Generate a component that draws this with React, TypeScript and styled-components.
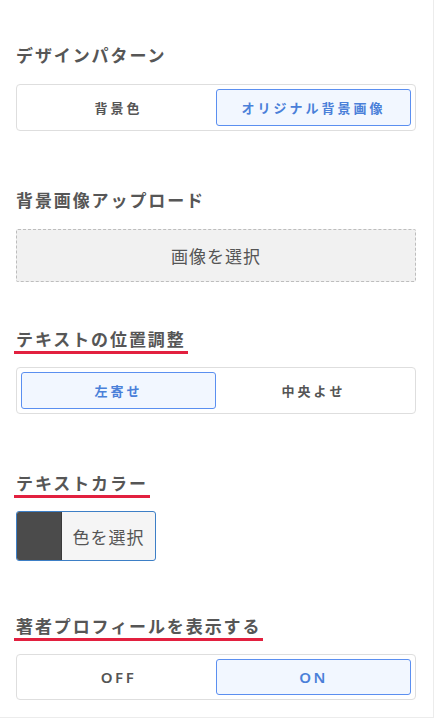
import styled, { createGlobalStyle } from "styled-components"

const GlobalStyle = createGlobalStyle`
    body {
        margin: 0;
        background: #fff;
        font-family: "Noto Sans CJK JP", "Noto Sans", sans-serif;
        color: #555;
    }
`

const Panel = styled.div`
    box-sizing: border-box;
    width: 434px;
    height: 718px;
    padding: 42px 17px 0 16px;
    border-right: 1px solid #ececec;
    border-bottom: 1px solid #ececec;
    display: flex;
    flex-direction: column;
`

const Section = styled.section<{ $top?: number }>`
    display: flex;
    flex-direction: column;
    align-items: flex-start;
    margin-top: ${(p) => p.$top ?? 0}px;
`

const Title = styled.h2<{ $marked?: boolean }>`
    margin: 0 0 ${(p) => (p.$marked ? 13 : 16)}px ${(p) => (p.$marked ? -2 : 0)}px;
    padding: 0 ${(p) => (p.$marked ? 2 : 0)}px;
    font-size: 17px;
    line-height: ${(p) => (p.$marked ? 24 : 26)}px;
    font-weight: 700;
    letter-spacing: 1.9px;
    color: #565656;
    border-bottom: ${(p) => (p.$marked ? "3px solid #e2203f" : "none")};
`

const Segmented = styled.div`
    box-sizing: border-box;
    width: 400px;
    padding: 4px;
    display: grid;
    grid-template-columns: 1fr 1fr;
    border: 1px solid #dedede;
    border-radius: 4px;
    background: #fff;
`

const Option = styled.button<{ $active?: boolean; $h: number }>`
    height: ${(p) => p.$h}px;
    margin: 0;
    padding: 0;
    border: 1.5px solid ${(p) => (p.$active ? "#5b8ff0" : "transparent")};
    border-radius: 3px;
    background: ${(p) => (p.$active ? "#f2f7ff" : "#fff")};
    color: ${(p) => (p.$active ? "#4a80d9" : "#555")};
    font-family: "Noto Sans CJK JP", "Noto Sans", sans-serif;
    font-size: 13px;
    font-weight: 700;
    letter-spacing: 3px;
`

const Latin = styled.span`
    font-family: "Noto Sans", sans-serif;
    font-size: 15px;
    font-weight: 600;
    letter-spacing: 2.5px;
`

const UploadBox = styled.button`
    box-sizing: border-box;
    width: 400px;
    height: 53px;
    border: 1px dashed #bdbdbd;
    border-radius: 2px;
    background: #f1f1f1;
    color: #555;
    font-family: "Noto Sans CJK JP", "Noto Sans", sans-serif;
    font-size: 17px;
    letter-spacing: 1px;
`

const ColorButton = styled.button`
    box-sizing: border-box;
    width: 140px;
    height: 50px;
    padding: 0;
    display: flex;
    border: 1.5px solid #3d7fc6;
    border-radius: 3px;
    overflow: hidden;
    background: #f5f5f5;
`

const Swatch = styled.span`
    width: 44px;
    background: #4b4b4b;
    border-right: 1px solid #3a3a3a;
`

const ColorLabel = styled.span`
    flex: 1;
    display: flex;
    align-items: center;
    justify-content: center;
    color: #555;
    font-family: "Noto Sans CJK JP", "Noto Sans", sans-serif;
    font-size: 17px;
    letter-spacing: 1px;
`

export default function App() {
    return (
        <>
            <GlobalStyle />
            <Panel>
                <Section>
                    <Title>デザインパターン</Title>
                    <Segmented>
                        <Option $h={37}>背景色</Option>
                        <Option $h={37} $active>オリジナル背景画像</Option>
                    </Segmented>
                </Section>
                <Section $top={56}>
                    <Title>背景画像アップロード</Title>
                    <UploadBox>画像を選択</UploadBox>
                </Section>
                <Section $top={45}>
                    <Title $marked>テキストの位置調整</Title>
                    <Segmented>
                        <Option $h={37} $active>左寄せ</Option>
                        <Option $h={37}>中央よせ</Option>
                    </Segmented>
                </Section>
                <Section $top={57}>
                    <Title $marked>テキストカラー</Title>
                    <ColorButton>
                        <Swatch />
                        <ColorLabel>色を選択</ColorLabel>
                    </ColorButton>
                </Section>
                <Section $top={53}>
                    <Title $marked>著者プロフィールを表示する</Title>
                    <Segmented>
                        <Option $h={36}><Latin>OFF</Latin></Option>
                        <Option $h={36} $active><Latin>ON</Latin></Option>
                    </Segmented>
                </Section>
            </Panel>
        </>
    )
}
